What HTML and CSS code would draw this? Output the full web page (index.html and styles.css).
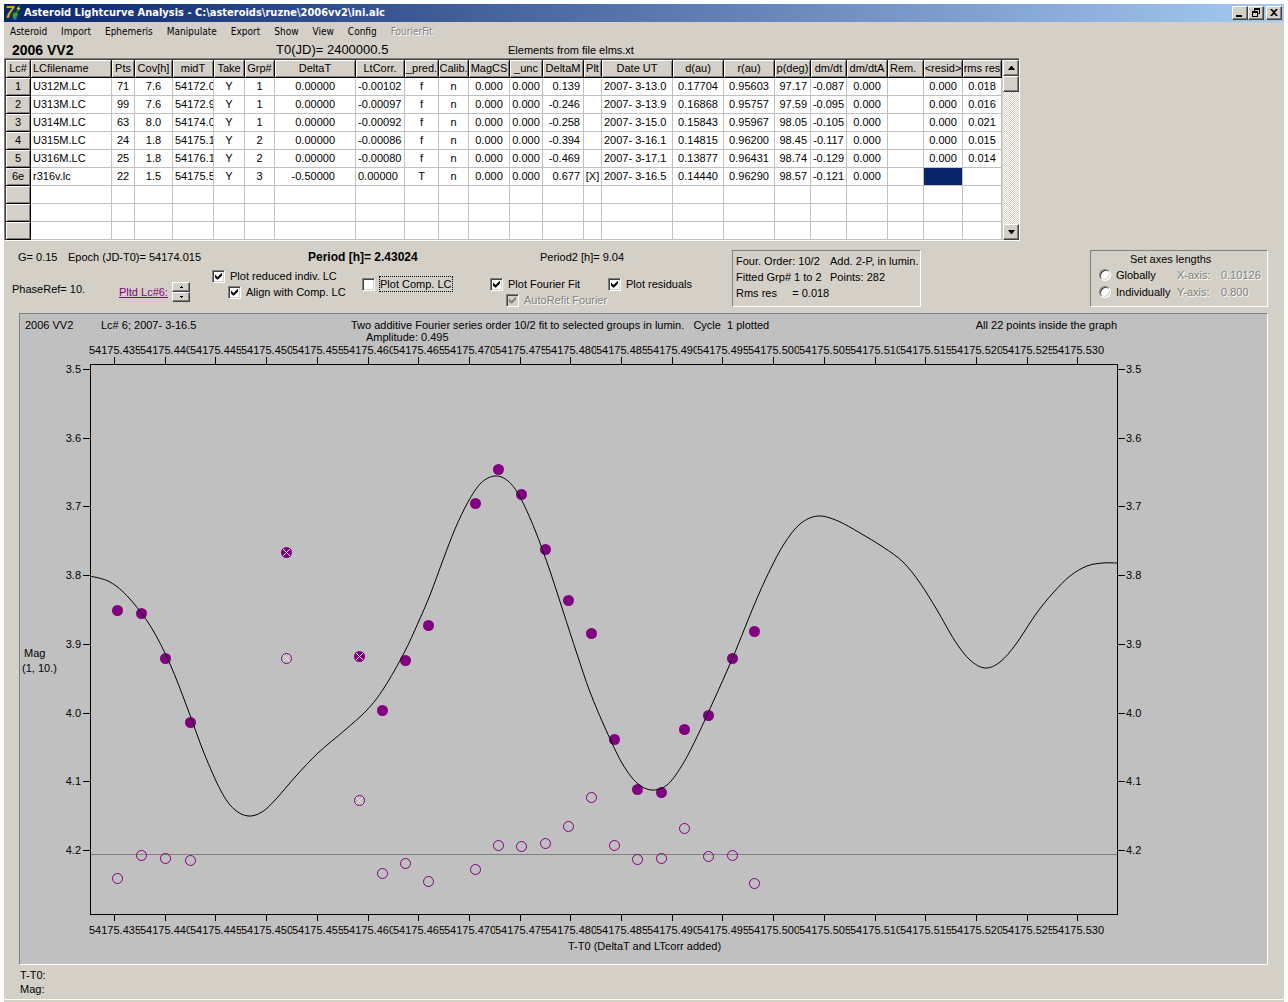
FILE: index.html
```html
<!DOCTYPE html>
<html lang="en">
<head>
    <meta charset="UTF-8">
    <meta name="viewport" content="width=device-width, initial-scale=1.0">
    <title>Asteroid Lightcurve Analysis</title>
    <link rel="stylesheet" href="styles.css">
</head>
<body>
<div class="window">

    <!-- Title bar -->
    <header class="title-bar">
        <svg class="app-icon" width="16" height="16" viewBox="0 0 16 16">
            <circle cx="10" cy="10" r="4" fill="#184038"/>
            <path d="M8 9l3-2 2 2-2 4-3 1z" fill="#30a848"/>
            <path d="M8 12l3 0 1 2-3 1z" fill="#2878c0"/>
            <path d="M15 0l-4 4h2l-2 4 5-5h-2z" fill="#e8f020" stroke="#205010" stroke-width=".5"/>
            <text class="icon-seven" x="0" y="13">7</text>
        </svg>
        <h1>Asteroid Lightcurve Analysis - C:\asteroids\ruzne\2006vv2\ini.alc</h1>
        <div class="window-buttons">
            <button class="bevel" aria-label="Minimize"><svg width="12" height="10"><path d="M2 7h6v2H2z"/></svg></button>
            <button class="bevel" aria-label="Restore"><svg width="12" height="10"><path d="M4 0h6v6H8V5h1V2H5v1H4zM2 3h6v6H2zM3 5v3h4V5z" fill-rule="evenodd"/></svg></button>
            <button class="bevel close" aria-label="Close"><svg width="12" height="10"><path d="M2 1h2l2 2 2-2h2L7 4.500l3 3.500H8L6 6 4 8H2l3-3.500z"/></svg></button>
        </div>
    </header>

    <nav class="menu">
        <button>Asteroid</button>
        <button>Import</button>
        <button>Ephemeris</button>
        <button>Manipulate</button>
        <button>Export</button>
        <button>Show</button>
        <button>View</button>
        <button>Config</button>
        <button disabled>FourierFit</button>
    </nav>

    <div class="info">
        <h2>2006 VV2</h2>
        <span class="epoch-zero">T0(JD)= 2400000.5</span>
        <span>Elements from file elms.xt</span>
    </div>

    <!-- Lightcurve list -->
    <div class="grid-box">
        <table class="grid">
            <colgroup id="cols"></colgroup>
            <thead><tr id="head"></tr></thead>
            <tbody id="rows"></tbody>
        </table>
        <div class="scrollbar">
            <button class="bevel" aria-label="Scroll up"><svg width="7" height="4"><path d="M3 0h1l3 4H0z"/></svg></button>
            <div class="bevel thumb"></div>
            <button class="bevel down" aria-label="Scroll down"><svg width="7" height="4"><path d="M0 0h7L4 4H3z"/></svg></button>
        </div>
    </div>

    <!-- Fit settings -->
    <div class="controls">
        <div class="settings">
            <div class="values">
                <span>G= 0.15</span>
                <span>Epoch (JD-T0)= 54174.015</span>
                <b>Period [h]= 2.43024</b>
                <span>Period2 [h]= 9.04</span>
            </div>
            <div class="options">
                <div class="phase">
                    <span class="phase-ref">PhaseRef= 10.</span>
                    <a href="#plot">Pltd Lc#6:</a>
                    <div class="spinner">
                        <button class="bevel" aria-label="Next"><svg width="3" height="2"><path d="M1 0h1v1h1v1H0V1h1z"/></svg></button>
                        <button class="bevel" aria-label="Previous"><svg width="3" height="2"><path d="M0 0h3v1H2v1H1V1H0z"/></svg></button>
                    </div>
                </div>
                <div class="checks first">
                    <label><input type="checkbox" checked>Plot reduced indiv. LC</label>
                    <label class="sub"><input type="checkbox" checked>Align with Comp. LC</label>
                </div>
                <div class="checks">
                    <label><input type="checkbox"><span class="focused">Plot Comp. LC</span></label>
                </div>
                <div class="checks">
                    <label><input type="checkbox" checked>Plot Fourier Fit</label>
                    <label class="sub disabled"><input type="checkbox" checked disabled>AutoRefit Fourier</label>
                </div>
                <div class="checks">
                    <label><input type="checkbox" checked>Plot residuals</label>
                </div>
            </div>
        </div>
        <div class="sunken fit">
            <span>Four. Order: 10/2</span><span>Add. 2-P, in lumin.</span>
            <span>Fitted Grp# 1 to 2</span><span>Points: 282</span>
            <span>Rms res     = 0.018</span>
        </div>
        <fieldset class="sunken axes">
            <legend>Set axes lengths</legend>
            <label><input type="radio" name="axes">Globally</label><span class="disabled">X-axis:</span><span class="disabled">0.10126</span>
            <label><input type="radio" name="axes">Individually</label><span class="disabled">Y-axis:</span><span class="disabled">0.800</span>
        </fieldset>
    </div>

    <div class="sunken plot-box">
        <svg id="plot" viewBox="20 314 1247 650"></svg>
    </div>

    <footer class="status">
        <p>T-T0:</p>
        <p>Mag:</p>
    </footer>
</div>

<script>
    // Column title, width, alignment
    const columns = [
        ["Lc#", 25, "center"], ["LCfilename", 81, "left"], ["Pts", 23, "center"], ["Cov[h]", 38, "center"],
        ["midT", 41, "left"], ["Take", 31, "center"], ["Grp#", 30, "center"], ["DeltaT", 81, "indent"],
        ["LtCorr.", 49, "left"], ["_pred.", 34, "center"], ["Calib.", 30, "center"], ["MagCS", 41, "center"],
        ["_unc", 33, "center"], ["DeltaM", 41, "right"], ["Plt", 18, "center"], ["Date UT", 71, "left"],
        ["d(au)", 51, "center"], ["r(au)", 51, "center"], ["p(deg)", 36, "right"], ["dm/dt", 36, "center"],
        ["dm/dtA", 41, "center"], ["Rem.", 36, "left"], ["<resid>", 39, "center"], ["rms res", 39, "center"]
    ];

    const rows = [
        "1|U312M.LC|71|7.6|54172.0|Y|1|0.00000|-0.00102|f|n|0.000|0.000|0.139||2007- 3-13.0|0.17704|0.95603|97.17|-0.087|0.000||0.000|0.018",
        "2|U313M.LC|99|7.6|54172.9|Y|1|0.00000|-0.00097|f|n|0.000|0.000|-0.246||2007- 3-13.9|0.16868|0.95757|97.59|-0.095|0.000||0.000|0.016",
        "3|U314M.LC|63|8.0|54174.0|Y|1|0.00000|-0.00092|f|n|0.000|0.000|-0.258||2007- 3-15.0|0.15843|0.95967|98.05|-0.105|0.000||0.000|0.021",
        "4|U315M.LC|24|1.8|54175.1|Y|2|0.00000|-0.00086|f|n|0.000|0.000|-0.394||2007- 3-16.1|0.14815|0.96200|98.45|-0.117|0.000||0.000|0.015",
        "5|U316M.LC|25|1.8|54176.1|Y|2|0.00000|-0.00080|f|n|0.000|0.000|-0.469||2007- 3-17.1|0.13877|0.96431|98.74|-0.129|0.000||0.000|0.014",
        "6e|r316v.lc|22|1.5|54175.5|Y|3|-0.50000|0.00000|T|n|0.000|0.000|0.677|[X]|2007- 3-16.5|0.14440|0.96290|98.57|-0.121|0.000|||",
        "", "", ""
    ];

    const escape = text => text.replace("<", "&lt;").replace(">", "&gt;");
    document.getElementById("cols").innerHTML = columns.map(c => `<col style="width:${c[1]}px">`).join("");
    document.getElementById("head").innerHTML = columns.map(c =>
        `<th scope="col" class="${c[0] === "LCfilename" || c[0] === "Rem." ? "left" : ""}">${escape(c[0])}</th>`).join("");
    document.getElementById("rows").innerHTML = rows.map((row, r) => {
        const cells = row.split("|");
        return "<tr>" + columns.map((c, i) => {
            if (i === 0) return `<th scope="row">${cells[0]}</th>`;
            const selected = r === 5 && i === 22 ? " selected" : "";
            return `<td class="${c[2]}${selected}">${cells[i] || ""}</td>`;
        }).join("") + "</tr>";
    }).join("");

    // x, y, residual y, rejected
    const points = [
        [117, 610, 878], [141, 613, 855], [165, 658, 858], [190, 722, 860], [286, 552, 658, true],
        [359, 656, 800, true], [382, 710, 873], [405, 660, 863], [428, 625, 881], [475, 503, 869],
        [498, 469, 845], [521, 494, 846], [545, 549, 843], [568, 600, 826], [591, 633, 797],
        [614, 739, 845], [637, 789, 859], [661, 792, 858], [684, 729, 828], [708, 715, 856],
        [732, 658, 855], [754, 631, 883]
    ];

    // Fourier fit
    const curve = [
        [90, 576], [110, 582], [129, 598], [151, 627], [170, 664], [187, 707], [204, 753], [221, 791],
        [234, 809], [248, 816], [262, 812], [276, 799], [296, 776], [318, 753], [345, 730],
        [367, 710], [384, 688], [404, 653], [418, 623], [430, 595],
        [443, 560], [455, 529], [468, 502], [481, 483], [495, 476], [508, 481],
        [520, 497], [535, 530], [550, 571], [563, 611], [577, 654], [590, 692],
        [606, 730], [622, 763], [637, 783], [652, 790], [667, 785],
        [681, 767], [695, 741], [713, 702], [733, 657], [755, 603], [770, 570], [784, 544],
        [800, 524], [818, 516], [838, 521], [860, 533], [883, 547],
        [903, 562], [920, 583], [937, 610], [955, 641], [970, 660],
        [985, 668], [1000, 662], [1016, 644], [1036, 614], [1053, 593], [1070, 576],
        [1087, 566], [1103, 563], [1117, 563]
    ];

    // Smooth path through all curve points
    function smoothPath(p) {
        let d = `M${p[0]}`;
        for (let i = 0; i < p.length - 1; i++) {
            const a = p[i - 1] || p[i], b = p[i], c = p[i + 1], e = p[i + 2] || c;
            d += `C${b[0] + (c[0] - a[0]) / 6},${b[1] + (c[1] - a[1]) / 6} ${c[0] - (e[0] - b[0]) / 6},${c[1] - (e[1] - b[1]) / 6} ${c}`;
        }
        return d;
    }

    let svg = `
        <text x="25" y="329">2006 VV2</text>
        <text x="101" y="329">Lc# 6; 2007- 3-16.5</text>
        <text x="351" y="329">Two additive Fourier series order 10/2 fit to selected groups in lumin.   Cycle  1 plotted</text>
        <text x="366" y="341">Amplitude: 0.495</text>
        <text x="1117" y="329" text-anchor="end">All 22 points inside the graph</text>
        <text x="24" y="657">Mag</text>
        <text x="22" y="672">(1, 10.)</text>
        <text x="568" y="950">T-T0 (DeltaT and LTcorr added)</text>`;

    // Time axes, each label covers the end of the one before it
    for (let i = 0; i < 20; i++) {
        const x = Math.round(114 + i * 50.7);
        const label = (54175.435 + i * 0.005).toFixed(3);
        for (const y of [354, 934]) {
            svg += `<rect class="label-back" x="${x - 25}" y="${y - 10}" width="53" height="12"/><text x="${x - 25}" y="${y}">${label}</text>`;
        }
        svg += `<path class="axis" d="M${x}.5 357v7M${x}.5 915v6"/>`;
    }

    // Magnitude axes
    for (let i = 0; i < 8; i++) {
        const y = Math.round(369 + i * 68.7);
        const label = (3.5 + i / 10).toFixed(1);
        svg += `<text x="81" y="${y + 4}" text-anchor="end">${label}</text><text x="1126" y="${y + 4}">${label}</text>
            <path class="axis" d="M83 ${y}.5h7M1118 ${y}.5h7"/>`;
    }

    svg += `<path class="zero" d="M91 854.5h1026"/><rect class="axis" x="90.5" y="364.5" width="1027" height="550"/>`;

    points.forEach(([x, y, residual, rejected]) => {
        const cross = v => `<path class="cross" d="M${x - 3} ${v - 3}l7 7m0 -7l-7 7"/>`;
        svg += `<circle class="dot" cx="${x + 0.5}" cy="${y + 0.5}" r="5.5"/><circle class="ring" cx="${x + 0.5}" cy="${residual + 0.5}" r="5"/>`;
        if (rejected) svg += cross(y) + cross(residual);
    });

    svg += `<path class="curve" d="${smoothPath(curve)}"/>`;
    document.getElementById("plot").innerHTML = svg;
</script>
</body>
</html>
```
FILE: styles.css
```css
body {
    margin: 0;
    padding: 4px 4px 0;
    background-color: white;
    color: black;
    font-family: "Liberation Sans", Arial, sans-serif;
    font-size: 11px;
    line-height: 14px;
}

h1, h2, p {
    margin: 0;
}

button {
    margin: 0;
    padding: 0;
    border: none;
    background: none;
    font: inherit;
    color: black;
}

.window {
    background-color: #d4d0c8;
    padding-bottom: 2px;
}

/* Raised and sunken edges */
.bevel {
    box-sizing: border-box;
    display: flex;
    align-items: center;
    justify-content: center;
    background-color: #d4d0c8;
    border: 1px solid;
    border-color: #fff #404040 #404040 #fff;
    box-shadow: inset -1px -1px #808080;
}

.sunken {
    border: 1px solid;
    border-color: #808080 #fff #fff #808080;
}

.disabled, .menu button:disabled {
    color: #808080;
    text-shadow: 1px 1px white;
}

/* Title bar */
.title-bar {
    display: flex;
    align-items: center;
    height: 18px;
    padding: 0 2px 0 1px;
    background: linear-gradient(to right, #0a246a, #a6caf0);
    color: white;
}

.title-bar h1 {
    flex: 1;
    margin-left: 3px;
    font-family: "DejaVu Sans Condensed", "DejaVu Sans", sans-serif;
    font-size: 11px;
    font-weight: bold;
}

.app-icon {
    overflow: visible;
}

.icon-seven {
    font-size: 16px;
    font-weight: bold;
    font-style: italic;
    fill: #f0d020;
    stroke: #504000;
    stroke-width: .5px;
}

.window-buttons {
    display: flex;
}

.window-buttons button {
    width: 16px;
    height: 14px;
}

.window-buttons .close {
    margin-left: 2px;
}

/* Menu */
.menu {
    display: flex;
    gap: 2px;
    height: 20px;
}

.menu button {
    padding: 0 6px;
    font-family: "DejaVu Sans Condensed", "DejaVu Sans", sans-serif;
    font-size: 10px;
}

.info {
    display: grid;
    grid-template-columns: 264px 232px auto;
    align-items: center;
    height: 16px;
    padding-left: 8px;
}

.info h2 {
    font-size: 14px;
}

.epoch-zero {
    font-size: 13px;
}

/* Lightcurve list */
.grid-box {
    display: flex;
    width: max-content;
    border: 1px solid;
    border-color: #808080 #fff #fff #808080;
    padding: 1px 0 0 1px;
    box-shadow: inset 1px 1px #404040;
}

.grid {
    table-layout: fixed;
    width: 996px;
    border-spacing: 0;
    background-color: white;
}

.grid th, .grid td {
    box-sizing: border-box;
    height: 18px;
    padding: 0;
    border: 0 solid #c0c0c0;
    border-width: 0 1px 1px 0;
    line-height: 17px;
    font-weight: normal;
    text-align: center;
    white-space: pre;
    overflow: hidden;
}

.grid th {
    background-color: #d4d0c8;
    border-color: black;
    box-shadow: inset 1px 1px #fff, inset -1px -1px #808080;
}

.grid th.left, .grid td.left {
    text-align: left;
    padding-left: 2px;
}

.grid td.right {
    text-align: right;
    padding-right: 3px;
}

.grid td.indent {
    text-align: right;
    padding-right: 20px;
}

.grid .selected {
    background-color: #0a246a;
}

.scrollbar {
    display: flex;
    flex-direction: column;
    width: 16px;
    margin-left: 1px;
    background: repeating-conic-gradient(#fff 0 25%, #d4d0c8 0 50%) 0 0 / 2px 2px;
}

.scrollbar .bevel {
    width: 16px;
    height: 16px;
}

.scrollbar .down {
    margin-top: auto;
}

/* Fit settings */
.controls {
    display: flex;
    align-items: flex-start;
    min-height: 63px;
    padding: 9px 16px 0 0;
}

.settings {
    flex: none;
    width: 728px;
}

.values {
    display: grid;
    grid-template-columns: 50px 240px 232px auto;
    padding-left: 14px;
}

.values b {
    font-size: 12px;
}

.options {
    display: grid;
    grid-template-columns: 208px 150px 128px 118px auto;
}

.phase {
    display: grid;
    grid-template-columns: 107px 53px 18px;
    align-items: center;
    padding: 18px 0 0 8px;
    height: 20px;
}

.phase-ref {
    align-self: start;
}

.phase a {
    color: #800080;
}

.spinner .bevel {
    width: 18px;
    height: 10px;
}

.checks {
    padding-top: 12px;
}

.checks.first {
    padding-top: 4px;
}

.checks label, .axes label {
    display: flex;
    align-items: center;
    height: 16px;
    white-space: nowrap;
}

.checks .sub {
    margin-left: 16px;
}

.focused {
    outline: 1px dotted black;
}

input {
    appearance: none;
    flex: none;
    box-sizing: border-box;
    margin: 0 5px 0 0;
    width: 13px;
    height: 13px;
    background-color: white;
    border: 1px solid;
    border-color: #808080 #fff #fff #808080;
    box-shadow: inset 1px 1px #404040, inset -1px -1px #d4d0c8;
}

input:disabled {
    background-color: #d4d0c8;
}

input:checked::before {
    content: "";
    display: block;
    width: 7px;
    height: 7px;
    margin: 2px;
    background-color: black;
    clip-path: polygon(0 29%, 0 71%, 29% 100%, 43% 100%, 100% 43%, 100% 0, 36% 64%);
}

input:checked:disabled::before {
    background-color: #808080;
}

input[type="radio"] {
    width: 12px;
    height: 12px;
    border-radius: 50%;
}

.fit {
    box-sizing: border-box;
    display: grid;
    grid-template-columns: 94px auto;
    grid-auto-rows: 16px;
    align-items: center;
    width: 189px;
    height: 57px;
    padding: 2px 0 0 3px;
    white-space: pre;
}

.axes {
    box-sizing: border-box;
    display: grid;
    grid-template-columns: 78px 44px auto;
    grid-template-rows: 15px 17px 17px;
    align-content: start;
    align-items: center;
    width: 178px;
    height: 57px;
    margin: 0 0 0 auto;
    padding: 0 0 0 8px;
}

.axes legend {
    float: left;
    grid-column: 1 / -1;
    padding: 0;
    margin-left: 31px;
}

/* Plot */
.plot-box {
    margin: 0 16px 0 15px;
    background-color: #c0c0c0;
}

#plot {
    display: block;
    width: 100%;
    height: auto;
}

#plot text {
    white-space: pre;
}

.label-back {
    fill: #c0c0c0;
}

.axis {
    fill: none;
    stroke: black;
    shape-rendering: crispEdges;
}

.zero {
    stroke: #808080;
    shape-rendering: crispEdges;
}

.dot {
    fill: #800080;
}

.ring {
    fill: none;
    stroke: #800080;
}

.cross {
    stroke: #e0e0e0;
}

.curve {
    fill: none;
    stroke: black;
}

.status {
    padding: 3px 16px;
    border-bottom: 1px solid white;
}
```
